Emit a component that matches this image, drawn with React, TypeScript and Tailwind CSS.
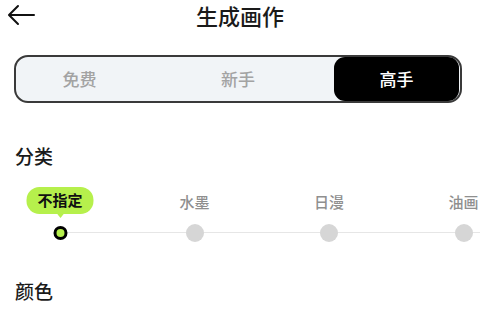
const font = { fontFamily: '"Noto Sans CJK SC", "Noto Sans", sans-serif' };

const tabs = ['免费', '新手', '高手'];
const styles = ['不指定', '水墨', '日漫', '油画'];

export default function App() {
  const activeTab = 2;
  const activeStyle = 0;

  return (
    <div className="w-[480px] h-[313px] bg-white overflow-hidden relative" style={font}>
      {/* header */}
      <div className="h-[30px] flex items-center justify-center relative">
        <button className="absolute left-[7px] top-[4px]">
          <svg width="30" height="22" viewBox="0 0 30 22" fill="none" stroke="#111" strokeWidth="2" strokeLinecap="round" strokeLinejoin="round">
            <path d="M11 2 L2 11 L11 20" />
            <path d="M3 11 H27" />
          </svg>
        </button>
        <h1 className="text-[22px] font-medium text-[#1a1a1a] leading-none">生成画作</h1>
      </div>

      {/* level tabs */}
      <div className="mt-[25px] mx-[14px] w-[448px] h-[48px] rounded-[14px] border-2 border-[#3a3a3a] bg-[#f1f4f7] flex justify-between items-center px-[1px]">
        {tabs.map((t, i) => (
          <div
            key={t}
            className={
              i === activeTab
                ? 'w-[125px] h-[44px] rounded-[11px] bg-black text-white flex items-center justify-center text-[17px] font-medium'
                : 'w-[125px] h-[44px] flex items-center justify-center text-[17px] font-medium text-[#a3a3a3]'
            }
          >
            {t}
          </div>
        ))}
      </div>

      {/* category */}
      <div className="mt-[43px] ml-[15px] text-[19px] font-medium text-[#1a1a1a] leading-none">分类</div>

      <div className="relative mt-[22px] h-[60px]">
        <div className="absolute left-[60px] right-0 top-[45px] h-px bg-[#e6e6e6]" />
        {styles.map((s, i) => {
          const cx = 60 + i * 134.5;
          const active = i === activeStyle;
          return (
            <div key={s} className="absolute top-0 flex flex-col items-center -translate-x-1/2 whitespace-nowrap" style={{ left: cx }}>
              {active ? (
                <div className="relative h-[27px] px-[11px] rounded-[13px] bg-[#b6f04c] flex items-center text-[15px] font-semibold text-[#111]">
                  {s}
                  <div className="absolute left-1/2 -translate-x-1/2 -bottom-[4px] w-0 h-0 border-l-[4px] border-r-[4px] border-t-[5px] border-l-transparent border-r-transparent border-t-[#b6f04c]" />
                </div>
              ) : (
                <div className="h-[27px] pt-[4px] flex items-center text-[15px] font-medium text-[#8f8f8f]">{s}</div>
              )}
              {active ? (
                <div className="mt-[12px] w-[14px] h-[14px] rounded-full border-[3px] border-black bg-[#b6f04c]" />
              ) : (
                <div className="mt-[10px] w-[18px] h-[18px] rounded-full bg-[#d6d6d6]" />
              )}
            </div>
          );
        })}
      </div>

      <div className="mt-[34px] ml-[15px] text-[19px] font-medium text-[#1a1a1a] leading-none">颜色</div>
    </div>
  );
}
